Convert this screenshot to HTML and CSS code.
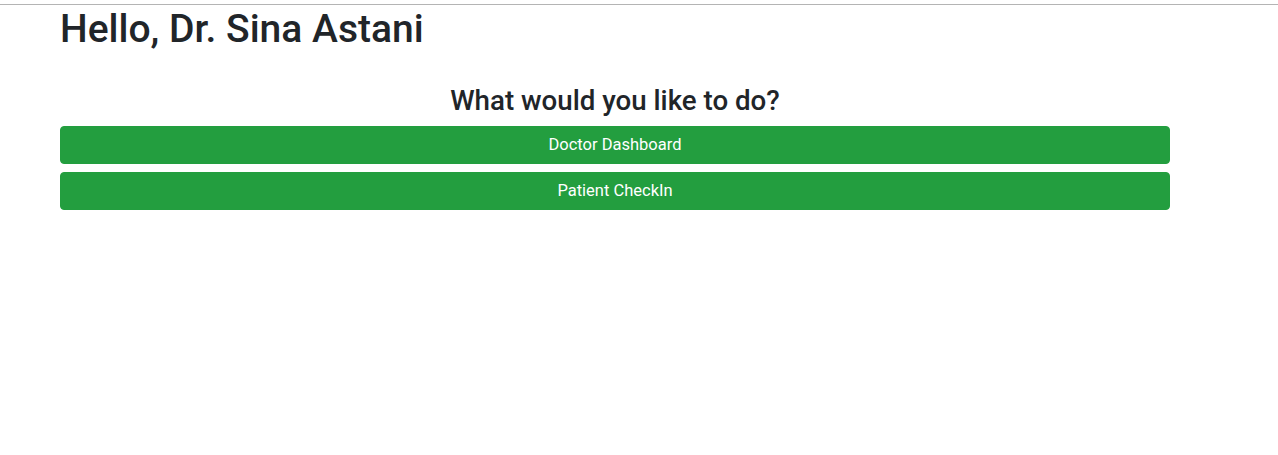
FILE: index.html
```html
<!DOCTYPE html>
<html>
<head>
<meta charset="utf-8">
<link rel="stylesheet" href="styles.css">
</head>
<body>
<div class="topline"></div>
<main class="page">
  <h1 class="greeting">Hello, Dr. Sina Astani</h1>
  <section class="actions">
    <h3 class="prompt">What would you like to do?</h3>
    <button class="btn">Doctor Dashboard</button>
    <button class="btn">Patient CheckIn</button>
  </section>
</main>
</body>
</html>
```

FILE: styles.css
```css
html, body {
  margin: 0;
  padding: 0;
  background: #fff;
}
body {
  font-family: Roboto, "Liberation Sans", Arial, sans-serif;
  color: #212529;
}
.topline {
  height: 4px;
  border-bottom: 1px solid #b4b4b4;
  box-sizing: content-box;
}
.page {
  width: 1110px;
  padding-left: 60px;
}
.greeting {
  margin: 0;
  font-size: 39px;
  font-weight: 500;
  line-height: 48px;
}
.actions {
  padding-top: 31px;
  display: flex;
  flex-direction: column;
  gap: 8px;
}
.prompt {
  margin: 0;
  text-align: center;
  font-size: 27.7px;
  font-weight: 500;
  line-height: 34px;
}
.btn {
  display: block;
  width: 100%;
  height: 38px;
  border: 1px solid #239e3f;
  border-radius: 4px;
  background: #239e3f;
  color: #fff;
  font-family: Roboto, "Liberation Sans", Arial, sans-serif;
  font-size: 16.5px;
  line-height: 24px;
  padding: 6px 12px;
  cursor: pointer;
}
```
